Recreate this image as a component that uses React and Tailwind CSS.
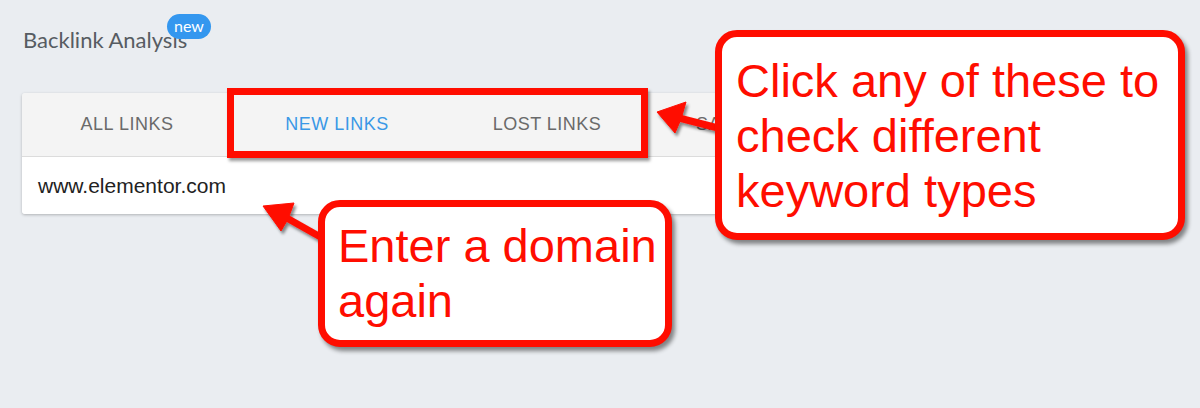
import React from 'react';

const tabs = [
  { label: 'ALL LINKS', active: false },
  { label: 'NEW LINKS', active: true },
  { label: 'LOST LINKS', active: false },
  { label: 'SAVED LINKS', active: false },
];

function Callout({ className, lines }) {
  return (
    <div
      className={`absolute bg-white border-[7px] border-[#ff0d00] rounded-[22px] shadow-[3px_4px_4px_rgba(0,0,0,0.45)] text-[#ff0d00] text-[47px] leading-[55px] ${className}`}
      style={{ fontFamily: '"Liberation Sans", Arial, sans-serif' }}
    >
      {lines.map((l) => (
        <div key={l} className="whitespace-nowrap">{l}</div>
      ))}
    </div>
  );
}

export default function App() {
  return (
    <div className="relative w-[1200px] h-[408px] overflow-hidden bg-[#eaedf1]">
      {/* page content */}
      <div className="px-[22px]">
        <div className="h-[93px] pt-[27px] pl-[1px]">
          <span
            className="relative inline-block text-[22px] leading-[26px] text-[#575c62]"
            style={{ fontFamily: 'Lato, "Noto Sans", sans-serif' }}
          >
            Backlink Analysis
            <span className="absolute left-[144px] top-[-13px] h-[25px] w-[44px] rounded-full bg-[#3497ef] text-white text-[16px] leading-[24px] text-center">
              new
            </span>
          </span>
        </div>

        <div
          className="rounded-[3px] shadow-[0_1px_3px_rgba(0,0,0,0.25)] overflow-hidden"
          style={{ fontFamily: '"Liberation Sans", Arial, sans-serif' }}
        >
          <div className="flex h-[64px] bg-[#f4f4f4] border-b border-[#dcdcdc]">
            {tabs.map((t) => (
              <div
                key={t.label}
                className={`w-[210px] flex items-center justify-center text-[18px] tracking-[0.5px] ${
                  t.active ? 'text-[#3a98e6]' : 'text-[#6a6a6a]'
                }`}
              >
                {t.label}
              </div>
            ))}
          </div>
          <div className="h-[57px] bg-white flex items-center px-[16px] text-[21px] text-[#222]">
            www.elementor.com
          </div>
        </div>
      </div>

      {/* highlight around tabs */}
      <div className="absolute left-[227px] top-[88px] w-[421px] h-[70px] border-[7px] border-[#ff0d00] shadow-[2px_3px_3px_rgba(0,0,0,0.4)]" />

      {/* arrows */}
      <svg className="absolute inset-0 pointer-events-none" width="1200" height="408">
        <defs>
          <filter id="sh" x="-20%" y="-20%" width="140%" height="140%">
            <feDropShadow dx="2" dy="3" stdDeviation="1.5" floodColor="#000" floodOpacity="0.45" />
          </filter>
        </defs>
        <g filter="url(#sh)" fill="#ff0d00" stroke="#ff0d00">
          <line x1="679" y1="118" x2="722" y2="129" strokeWidth="7" />
          <polygon points="657,112 686,102 681,119 675,133" strokeWidth="1" />
          <line x1="285" y1="217" x2="324" y2="239" strokeWidth="7" />
          <polygon points="263,206 294,203 288,219 281,231" strokeWidth="1" />
        </g>
      </svg>

      <Callout
        className="left-[715px] top-[30px] w-[470px] h-[210px] pt-[16px] pl-[14px]"
        lines={['Click any of these to', 'check different', 'keyword types']}
      />
      <Callout
        className="left-[318px] top-[200px] w-[354px] h-[147px] pt-[11px] pl-[13px]"
        lines={['Enter a domain', 'again']}
      />
    </div>
  );
}
